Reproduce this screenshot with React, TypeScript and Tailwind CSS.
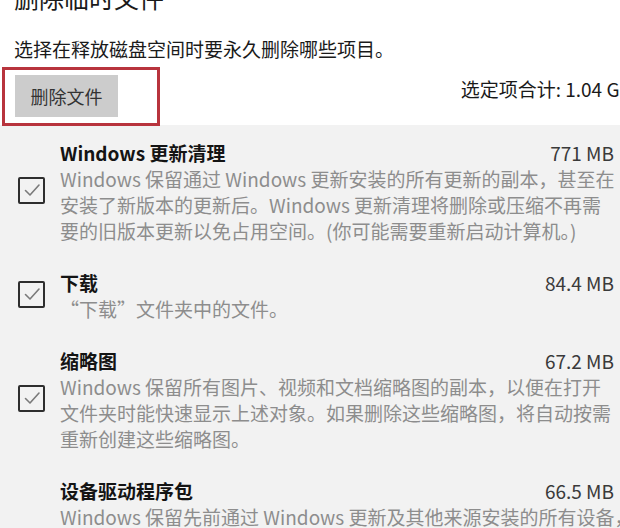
import React from 'react';

type CleanupItem = {
  title: string;
  size: string;
  lines: string[];
};

const ITEMS: CleanupItem[] = [
  {
    title: 'Windows 更新清理',
    size: '771 MB',
    lines: [
      'Windows 保留通过 Windows 更新安装的所有更新的副本，甚至在',
      '安装了新版本的更新后。Windows 更新清理将删除或压缩不再需',
      '要的旧版本更新以免占用空间。(你可能需要重新启动计算机。)',
    ],
  },
  {
    title: '下载',
    size: '84.4 MB',
    lines: ['“下载”文件夹中的文件。'],
  },
  {
    title: '缩略图',
    size: '67.2 MB',
    lines: [
      'Windows 保留所有图片、视频和文档缩略图的副本，以便在打开',
      '文件夹时能快速显示上述对象。如果删除这些缩略图，将自动按需',
      '重新创建这些缩略图。',
    ],
  },
  {
    title: '设备驱动程序包',
    size: '66.5 MB',
    lines: [
      'Windows 保留先前通过 Windows 更新及其他来源安装的所有设备，',
      '驱动程序包的副本，即使已安装了较新版本的驱动程序包。删',
      '除较早的驱动程序包副本后，将无法回滚到这些版本。',
      '仅删除当前未使用的驱动程序包。',
      '(你可能需要重新启动计算机。)',
    ],
  },
];

function CheckBox() {
  return (
    <div className="w-[27px] h-[27px] border-[2.5px] border-[#2e2e2e] rounded-[2px] flex items-center justify-center">
      <svg width="20" height="20" viewBox="0 0 20 20" fill="none">
        <path d="M3.5 10.5 L8 15 L17 5" stroke="#7a7a7a" strokeWidth="1.6" strokeLinecap="round" strokeLinejoin="round" />
      </svg>
    </div>
  );
}

function ItemRow({ item }: { item: CleanupItem }) {
  return (
    <div className="flex items-center">
      <div className="w-[60px] shrink-0 pl-[18px] mt-[-4px]">
        <CheckBox />
      </div>
      <div className="flex-1 min-w-0 pr-[6px]">
        <div className="flex justify-between items-center leading-[26px]">
          <span className="text-[19px] font-bold text-[#141414]">{item.title}</span>
          <span className="text-[19px] text-[#3a3a3a]">{item.size}</span>
        </div>
        {item.lines.map((line) => (
          <div key={line} className="text-[19px] leading-[26px] text-[#8d8d8d] whitespace-nowrap">
            {line}
          </div>
        ))}
      </div>
    </div>
  );
}

export default function App() {
  return (
    <div
      className="relative w-[620px] h-[528px] overflow-hidden bg-white"
      style={{ fontFamily: '"Noto Sans CJK SC", "Noto Sans", sans-serif' }}
    >
      <div className="mt-[-18px] pl-[14px] text-[25px] leading-[30px] text-[#1a1a1a]">删除临时文件</div>

      <div className="mt-[24px] pl-[14px] text-[19px] leading-[26px] text-[#1a1a1a]">
        选择在释放磁盘空间时要永久删除哪些项目。
      </div>

      <div className="flex items-start justify-between mt-[13px] h-[50px]">
        <button className="ml-[15px] w-[103px] h-[42px] bg-[#cccccc] text-[18px] text-[#333] flex items-center justify-center">
          删除文件
        </button>
        <div className="mt-[2px] mr-[-12px] text-[19px] leading-[24px] text-[#1a1a1a] whitespace-nowrap">
          选定项合计: 1.04 GB
        </div>
      </div>

      <div className="bg-[#f2f2f2] pt-[15px] flex flex-col gap-[26px] h-full">
        {ITEMS.map((item) => (
          <ItemRow key={item.title} item={item} />
        ))}
      </div>

      {/* red highlight around the delete button */}
      <div className="absolute left-[2px] top-[67px] w-[158px] h-[59px] border-[3px] border-[#b8343d]" />
    </div>
  );
}
